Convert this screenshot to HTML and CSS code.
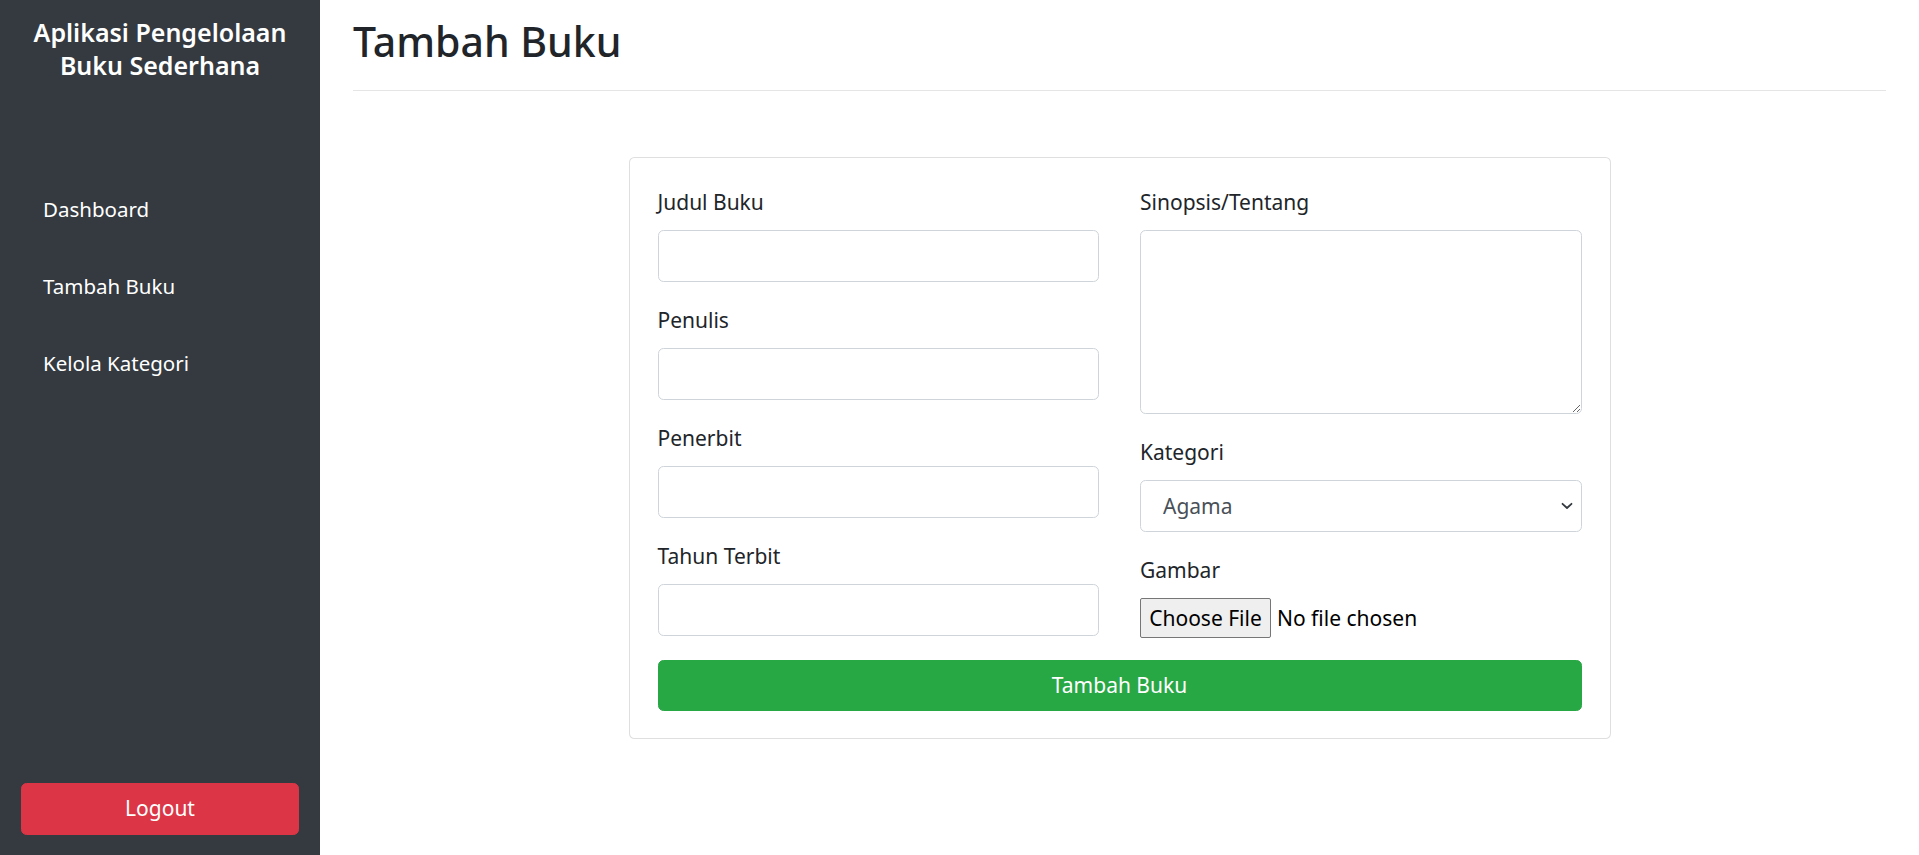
FILE: index.html
```html
<!DOCTYPE html>
<html lang="id">
<head>
<meta charset="utf-8">
<title>Tambah Buku</title>
<link rel="stylesheet" href="styles.css">
</head>
<body>
<div class="app">
  <aside class="sidebar">
    <h5 class="brand">Aplikasi Pengelolaan Buku Sederhana</h5>
    <nav class="nav">
      <a class="nav-link" href="#">Dashboard</a>
      <a class="nav-link" href="#">Tambah Buku</a>
      <a class="nav-link" href="#">Kelola Kategori</a>
    </nav>
    <a class="btn btn-logout" href="#">Logout</a>
  </aside>
  <main class="main">
    <header class="page-header">
      <h2 class="page-title">Tambah Buku</h2>
    </header>
    <form class="card">
      <div class="form-grid">
        <div class="form-col">
          <div class="form-group">
            <label class="label" for="judul">Judul Buku</label>
            <input class="control" id="judul" type="text">
          </div>
          <div class="form-group">
            <label class="label" for="penulis">Penulis</label>
            <input class="control" id="penulis" type="text">
          </div>
          <div class="form-group">
            <label class="label" for="penerbit">Penerbit</label>
            <input class="control" id="penerbit" type="text">
          </div>
          <div class="form-group">
            <label class="label" for="tahun">Tahun Terbit</label>
            <input class="control" id="tahun" type="text">
          </div>
        </div>
        <div class="form-col">
          <div class="form-group">
            <label class="label" for="sinopsis">Sinopsis/Tentang</label>
            <textarea class="control textarea" id="sinopsis" rows="5"></textarea>
          </div>
          <div class="form-group">
            <label class="label" for="kategori">Kategori</label>
            <div class="select-wrap">
              <select class="control select" id="kategori">
                <option>Agama</option>
              </select>
              <svg class="chevron" width="12" height="8" viewBox="0 0 12 8"><path d="M1.5 1.8 L6 6 L10.5 1.8" fill="none" stroke="#343a40" stroke-width="1.8" stroke-linecap="round" stroke-linejoin="round"/></svg>
            </div>
          </div>
          <div class="form-group">
            <span class="label">Gambar</span>
            <div class="file">
              <span class="file-btn">Choose File</span>
              <span class="file-text">No file chosen</span>
            </div>
          </div>
        </div>
      </div>
      <button class="btn btn-submit" type="button">Tambah Buku</button>
    </form>
  </main>
</div>
</body>
</html>
```
FILE: styles.css
```css
* { box-sizing: border-box; }

html, body {
  margin: 0;
  padding: 0;
  height: 100%;
}

body {
  font-family: "Noto Sans", "Open Sans", sans-serif;
  font-size: 21px;
  line-height: 33px;
  color: #212529;
  background: #fff;
}

.app {
  display: flex;
  height: 100vh;
}

/* Sidebar */
.sidebar {
  width: 320px;
  flex: 0 0 320px;
  background: #343a40;
  display: flex;
  flex-direction: column;
  padding: 16px 21px 20px;
}

.brand {
  margin: 0 0 100px;
  color: #fff;
  font-size: 25px;
  line-height: 33px;
  font-weight: 600;
  text-align: center;
}

.nav {
  display: flex;
  flex-direction: column;
}

.nav-link {
  display: block;
  padding: 11px 22px;
  margin-bottom: 22px;
  color: #fff;
  text-decoration: none;
  font-size: 20.5px;
  line-height: 33px;
}

.btn {
  display: block;
  text-align: center;
  text-decoration: none;
  border: 1px solid transparent;
  border-radius: 5.5px;
  font-family: inherit;
  font-size: 21px;
  line-height: 33px;
  padding: 8px 16px;
  color: #fff;
  cursor: pointer;
}

.btn-logout {
  margin-top: auto;
  background: #dc3545;
  border-color: #dc3545;
  height: 52px;
}

/* Main */
.main {
  flex: 1;
  min-width: 0;
  padding: 15px 33px 0;
}

.page-header {
  border-bottom: 1px solid rgba(0, 0, 0, 0.1);
  padding-bottom: 22px;
}

.page-title {
  margin: 0;
  font-size: 41px;
  line-height: 53px;
  font-weight: 500;
  color: #212529;
}

.card {
  width: 982px;
  margin: 66px auto 0;
  border: 1px solid rgba(0, 0, 0, 0.125);
  border-radius: 5.5px;
  padding: 28px 28px 27px;
  background: #fff;
}

.form-grid {
  display: grid;
  grid-template-columns: 1fr 1fr;
  column-gap: 41px;
}

.form-group {
  margin-bottom: 22px;
  display: flex;
  flex-direction: column;
}

.label {
  display: block;
  margin-bottom: 11px;
  line-height: 33px;
}

.control {
  display: block;
  width: 100%;
  height: 52px;
  padding: 8px 16px;
  font-family: inherit;
  font-size: 21px;
  line-height: 33px;
  color: #495057;
  background: #fff;
  border: 1px solid #ced4da;
  border-radius: 5.5px;
  outline: none;
}

.textarea {
  height: 184px;
}

.select-wrap {
  position: relative;
}

.select {
  appearance: none;
  -webkit-appearance: none;
  padding-left: 22px;
}

.chevron {
  position: absolute;
  right: 9px;
  top: 22px;
  pointer-events: none;
}

.file {
  display: flex;
  align-items: center;
  gap: 6px;
  color: #212529;
}

.file-btn {
  display: inline-block;
  height: 40px;
  width: 131px;
  line-height: 38px;
  text-align: center;
  background: #efefef;
  border: 1px solid #767676;
  border-radius: 2px;
  color: #000;
}

.file-text {
  color: #000;
}

.btn-submit {
  width: 100%;
  height: 51px;
  padding: 8px 16px;
  background: #28a745;
  border-color: #28a745;
}
```
